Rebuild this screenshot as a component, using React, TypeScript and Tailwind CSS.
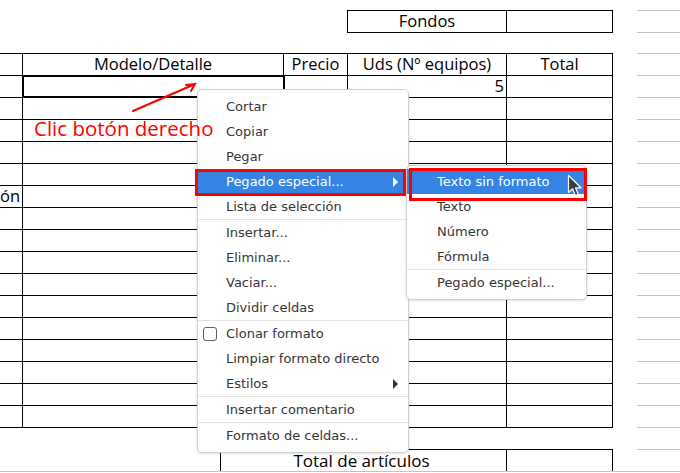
import React from 'react';

// spreadsheet column widths (px, border-box, each with a right border)
const COLS = ['w-[23px]', 'w-[261px]', 'w-[64px]', 'w-[159px]', 'w-[106px]'];

const SHEET_FONT = "font-['Open_Sans',sans-serif]";
const MENU_FONT = "font-['DejaVu_Sans',sans-serif]";

type MenuItem = {
  label: string;
  sepBefore?: boolean;
  sub?: boolean;
  check?: boolean;
  active?: boolean;
};

const MAIN_MENU: MenuItem[] = [
  { label: 'Cortar' },
  { label: 'Copiar' },
  { label: 'Pegar' },
  { label: 'Pegado especial...', sub: true, active: true },
  { label: 'Lista de selección' },
  { label: 'Insertar...', sepBefore: true },
  { label: 'Eliminar...' },
  { label: 'Vaciar...' },
  { label: 'Dividir celdas' },
  { label: 'Clonar formato', sepBefore: true, check: true },
  { label: 'Limpiar formato directo' },
  { label: 'Estilos', sub: true },
  { label: 'Insertar comentario', sepBefore: true },
  { label: 'Formato de celdas...', sepBefore: true },
];

const SUB_MENU: MenuItem[] = [
  { label: 'Texto sin formato', active: true },
  { label: 'Texto' },
  { label: 'Número' },
  { label: 'Fórmula' },
  { label: 'Pegado especial...', sepBefore: true },
];

function Band({ h = 'h-[22px]', children }: { h?: string; children?: React.ReactNode }) {
  return (
    <div className={`flex ${h}`}>
      <div className="flex w-[637px]">{children}</div>
      <div className="w-[43px] border-t border-[#c4c4c4]" />
    </div>
  );
}

function DataRow({ index }: { index: number }) {
  return (
    <Band>
      <div className="flex w-[613px] border-t border-black">
        {COLS.map((w, i) => (
          <div key={i} className={`relative flex items-center border-r border-black ${w}`}>
            {index === 0 && i === 1 && (
              <div className="absolute -left-px -top-px h-[23px] w-[263px] border-2 border-black" />
            )}
            {index === 0 && i === 3 && <span className="ml-auto pr-[2px] text-[16.5px]">5</span>}
            {index === 5 && i === 0 && <span className="ml-auto pr-[9px] text-[16.5px]">ón</span>}
          </div>
        ))}
      </div>
    </Band>
  );
}

function Menu({ items, className, pl }: { items: MenuItem[]; className: string; pl: string }) {
  return (
    <div
      className={`absolute rounded-[5px] border border-[#cfcfcf] bg-white text-[13px] text-[#353535] shadow-[0_1px_3px_rgba(0,0,0,0.12)] ${MENU_FONT} ${className}`}
    >
      {items.map((it) => (
        <React.Fragment key={it.label}>
          {it.sepBefore && <div className="h-px bg-[#e3e3e3]" />}
          <div
            className={`relative flex h-[25px] items-center pr-[10px] ${pl} ${
              it.active ? 'bg-[#3584e4] text-white' : ''
            }`}
          >
            {it.check && (
              <span className="absolute left-[5px] top-[6px] h-[14px] w-[14px] rounded-[3px] border border-[#5e5e5e]" />
            )}
            <span>{it.label}</span>
            {it.sub && (
              <span
                className={`ml-auto h-0 w-0 border-y-[5px] border-l-[5px] border-y-transparent ${
                  it.active ? 'border-l-white' : 'border-l-[#353535]'
                }`}
              />
            )}
          </div>
        </React.Fragment>
      ))}
    </div>
  );
}

export default function App() {
  return (
    <div className={`relative h-[473px] w-[680px] overflow-hidden bg-white pt-[10px] text-black ${SHEET_FONT}`}>
      {/* Fondos box */}
      <Band>
        <div className="w-[347px]" />
        <div className="flex w-[160px] items-center justify-center border-x border-t border-black text-[16.5px]">
          Fondos
        </div>
        <div className="w-[106px] border-r border-t border-black" />
      </Band>
      <Band h="h-[21px]">
        <div className="w-[347px]" />
        <div className="w-[266px] border-t border-black" />
      </Band>

      {/* header row */}
      <Band>
        <div className="flex w-[613px] border-t border-black text-[16.5px]">
          {['', 'Modelo/Detalle', 'Precio', 'Uds (Nº equipos)', 'Total'].map((t, i) => (
            <div key={i} className={`flex items-center justify-center border-r border-black ${COLS[i]}`}>
              {t}
            </div>
          ))}
        </div>
      </Band>

      {Array.from({ length: 16 }, (_, i) => (
        <DataRow key={i} index={i} />
      ))}

      {/* table closing line */}
      <Band>
        <div className="w-[613px] border-t border-black" />
      </Band>

      {/* total row */}
      <Band>
        <div className="w-[220px]" />
        <div className="flex w-[287px] items-center justify-center border-x border-t border-black pr-[4px] text-[17px]">
          Total de artículos
        </div>
        <div className="w-[106px] border-r border-t border-black" />
      </Band>
      <div className="h-[2px] border-t border-[#c4c4c4]" />

      {/* context menus */}
      <Menu items={MAIN_MENU} className="left-[197px] top-[89px] w-[212px] pb-[4px] pt-[4px]" pl="pl-[28px]" />
      <Menu items={SUB_MENU} className="left-[406px] top-[165px] w-[181px] pb-[4px] pt-[3px]" pl="pl-[30px]" />

      {/* red highlight boxes */}
      <div className="absolute left-[195px] top-[169px] h-[27px] w-[211px] border-[3px] border-[#ff0000]" />
      <div className="absolute left-[409px] top-[168px] h-[33px] w-[178px] border-[3px] border-[#ff0000]" />

      {/* annotation, drawn over the menu */}
      <span className="absolute left-[34px] top-[118px] text-[20.5px] leading-[20px] text-[#ff0000]">
        Clic botón derecho
      </span>
      <svg className="absolute left-[128px] top-[78px]" width="72" height="38" viewBox="0 0 72 38" fill="none">
        <path d="M5 33 L67 6 M58 7 L67 6 L63 13" stroke="#ff0000" strokeWidth="2" strokeLinecap="round" />
      </svg>

      {/* mouse pointer */}
      <svg className="absolute left-[567px] top-[174px]" width="16" height="24" viewBox="0 0 16 24">
        <path
          d="M1.5 1.5 L1.5 18.5 L5.6 14.8 L8.4 21.5 L11.2 20.3 L8.5 13.8 L14 13.8 Z"
          fill="#3d3d3d"
          stroke="#ffffff"
          strokeWidth="1.2"
          strokeLinejoin="round"
        />
      </svg>
    </div>
  );
}
